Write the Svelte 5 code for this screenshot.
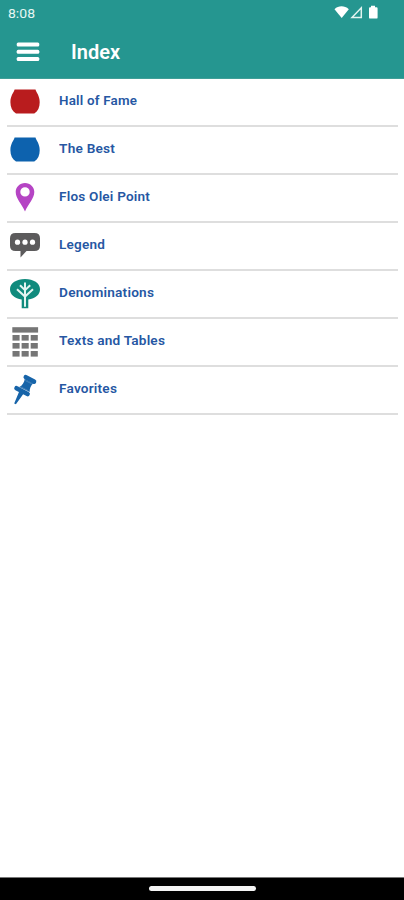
<script>
  const items = [
    { label: 'Hall of Fame', icon: 'pot', color: '#b91c1e', width: 78 },
    { label: 'The Best', icon: 'pot', color: '#0d62ae', width: 56 },
    { label: 'Flos Olei Point', icon: 'place', color: '#b544c4', width: 91 },
    { label: 'Legend', icon: 'chat', color: '#5c5b5c', width: 46 },
    { label: 'Denominations', icon: 'tree', color: '#108b7d', width: 95 },
    { label: 'Texts and Tables', icon: 'table', color: '#767676', width: 106 },
    { label: 'Favorites', icon: 'pushpin', color: '#1764a9', width: 58 }
  ];
  const cells = [0, 1, 2].flatMap((r) => [0, 1, 2].map((c) => [3.5 + c * 9.1, 9 + r * 8]));
</script>

<div class="screen">
  <header>
    <div class="status">
      <svg class="time" width="30" height="20"><text x="0" y="15" textLength="27" lengthAdjust="spacingAndGlyphs">8:08</text></svg>
      <svg class="signals" width="46" height="16" viewBox="0 0 46 16" fill="#fff">
        <path d="M0.5 4.2C4.5 0.4 10.5 0.4 14.8 4.2L7.7 13Z" />
        <path d="M18 12.4H27.3V2.8Z" fill="none" stroke="#e2f4f0" stroke-width="1.5" />
        <path d="M37 .8H41V2.3H42.5Q43.6 2.3 43.6 3.4V12.4Q43.6 13.6 42.4 13.6H36.3Q35 13.6 35 12.4V3.4Q35 2.3 36 2.3H37Z" />
      </svg>
    </div>
    <div class="toolbar">
      <svg width="24" height="20" viewBox="0 0 24 20" fill="#fff">
        <rect x=".7" y=".5" width="22.6" height="4" rx="1.5" />
        <rect x=".7" y="7.7" width="22.6" height="4" rx="1.5" />
        <rect x=".7" y="15" width="22.6" height="4" rx="1.5" />
      </svg>
      <h1><svg width="52" height="28"><text x="0" y="21" textLength="49" lengthAdjust="spacingAndGlyphs">Index</text></svg></h1>
    </div>
  </header>

  <ul>
    {#each items as item}
      <li>
        <svg class="icon" width="32" height="32" viewBox="0 0 32 32" style:color={item.color}>
          {#if item.icon === 'pot'}
            <path fill="currentColor" d="M5.6 3.6H26.5C27.4 6.8 30.7 9.8 30.7 16.2C30.7 21.2 29 25.2 25.3 27.6H7C3.3 25.2 1.4 21.2 1.4 16.2C1.4 9.8 4.7 6.8 5.6 3.6Z" />
          {:else if item.icon === 'place'}
            <path fill="currentColor" fill-rule="evenodd" d="M16 1C10.8 1 6.7 5 6.7 10.1C6.7 16.8 12.8 22 16 29.5C19.2 22 25.3 16.8 25.3 10.1C25.3 5 21.2 1 16 1ZM16 5.2A4.7 4.7 0 1 1 16 14.6A4.7 4.7 0 1 1 16 5.2Z" />
          {:else if item.icon === 'chat'}
            <path fill="currentColor" d="M6.5 3H25.5Q31 3 31 8.2V15.8Q31 21 25.5 21H17.5L11.5 27.5V21H6.5Q1 21 1 15.8V8.2Q1 3 6.5 3Z" />
            <g fill="#fff"><circle cx="8.5" cy="12.2" r="2.6" /><circle cx="16" cy="12.2" r="2.6" /><circle cx="23.5" cy="12.2" r="2.6" /></g>
          {:else if item.icon === 'tree'}
            <path fill="currentColor" d="M16 1C24.5 1 31 5.2 31 11.3C31 16.8 26.3 20.6 19.3 21.4V30.3H12.7V21.4C5.8 20.6 1 16.8 1 11.3C1 5.2 7.5 1 16 1Z" />
            <path fill="none" stroke="#e4f5f1" stroke-width="2" d="M16 4.5V28.8M8 11.3L16 18.6L24 11.3M11 7.2L16 12.2L21.2 7.2" />
          {:else if item.icon === 'table'}
            <rect x="3.3" y="1.2" width="25.8" height="5.4" fill="currentColor" />
            {#each cells as [x, y]}
              <rect {x} {y} width="7.1" height="5.6" fill="currentColor" />
            {/each}
          {:else}
            <path fill="none" stroke="currentColor" stroke-width="4.6" stroke-linecap="round" d="M16.8 3.2L25 7.6M7.5 14.2L18.6 20" />
            <path fill="currentColor" d="M15.8 5L24 9.5C21.8 11.8 20.6 14.2 20.6 18L10.2 13C13.4 11.7 15.2 8.6 15.8 5ZM10.8 16L15.4 18.4L6.9 30.2L5.2 29.5Z" />
            <path d="M16.4 6.6L22.8 9.9M11.6 12.8L19 16.6" stroke="#fff" stroke-width=".6" opacity=".35" />
          {/if}
        </svg>
        <svg class="label" width="120" height="20"><text x="0.1" y="15" textLength={item.width} lengthAdjust="spacingAndGlyphs">{item.label}</text></svg>
      </li>
    {/each}
  </ul>

  <footer><span></span></footer>
</div>

<style>
  :global(body) { margin: 0; }
  .screen {
    width: 404px;
    height: 900px;
    display: flex;
    flex-direction: column;
    background: #fff;
    font-family: Roboto, sans-serif;
    overflow: hidden;
  }
  svg { display: block; flex: none; }
  header { height: 79px; box-sizing: border-box; background: #259690; border-bottom: 1px solid #409f98; flex: none; }
  .status { height: 26px; display: flex; justify-content: space-between; padding: 0 24px 0 8px; }
  .time { margin-top: 3px; }
  .time text { font-size: 13.5px; fill: #e6f6f3; }
  .signals { margin-top: 5px; }
  .toolbar { height: 52px; display: flex; align-items: center; padding-left: 16px; }
  h1 { margin: 0 0 0 31px; }
  h1 text { font-size: 20px; font-weight: 600; fill: #fff; }
  ul { margin: 0; padding: 0 6px 0 7px; list-style: none; flex: 1; }
  li { height: 48px; box-sizing: border-box; display: flex; border-bottom: 2px solid #dedede; padding-left: 2px; }
  .icon { margin-top: 7px; }
  .label { margin: 11px 0 0 18px; }
  .label text { font-size: 13.3px; font-weight: 600; letter-spacing: .2px; fill: #2657a3; }
  footer { height: 23px; box-sizing: border-box; background: #000; border-top: 1px solid #777; display: flex; justify-content: center; flex: none; }
  footer span { width: 107px; height: 5px; border-radius: 3px; background: #f4f4f4; margin-top: 8px; }
</style>
